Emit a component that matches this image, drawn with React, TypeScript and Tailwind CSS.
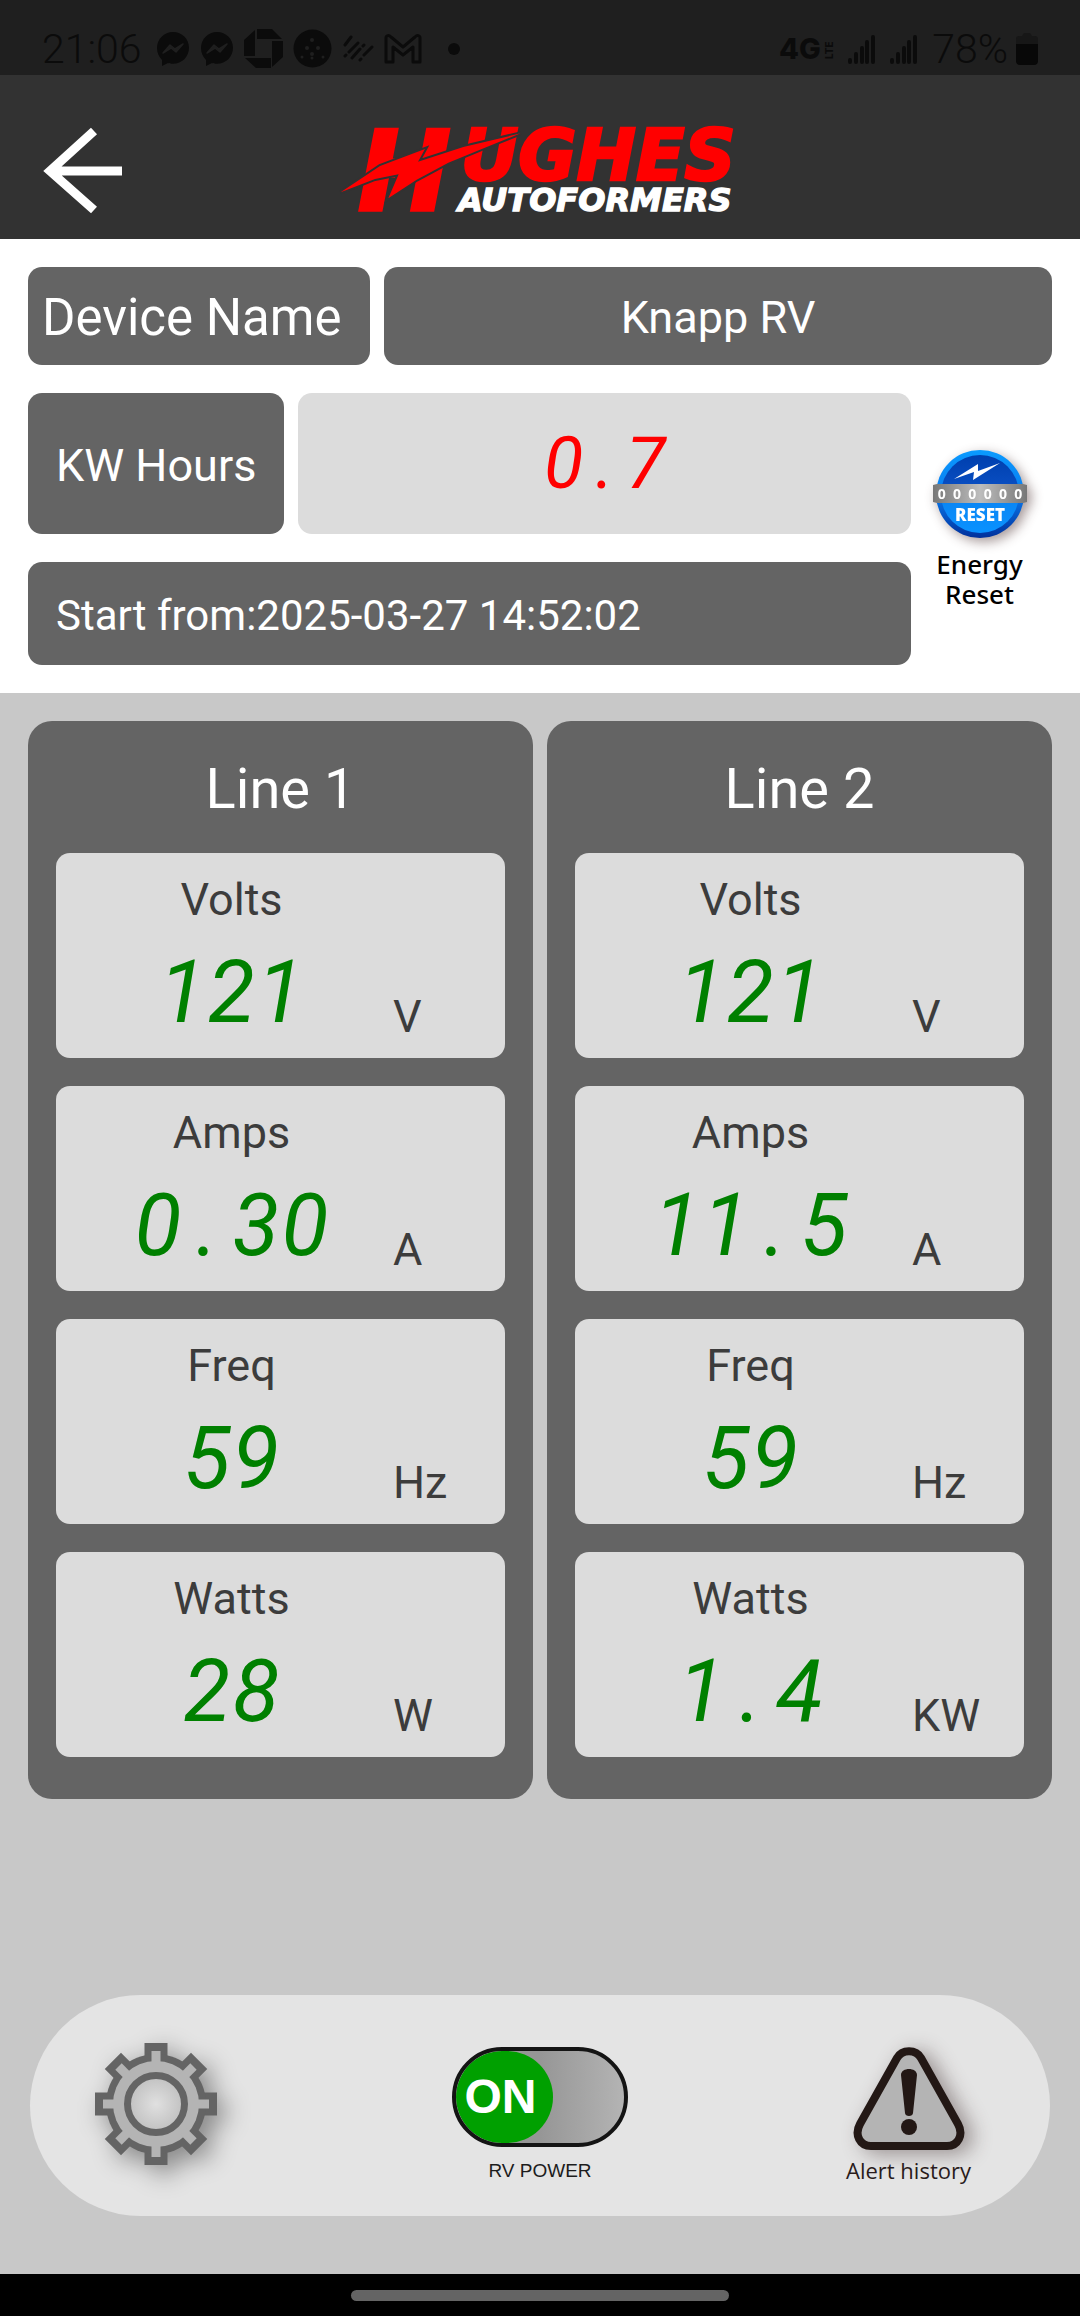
import React, { useState } from "react";

type Reading = { label: string; value: string; unit: string };

const lines: { title: string; readings: Reading[] }[] = [
  {
    title: "Line 1",
    readings: [
      { label: "Volts", value: "121", unit: "V" },
      { label: "Amps", value: "0.30", unit: "A" },
      { label: "Freq", value: "59", unit: "Hz" },
      { label: "Watts", value: "28", unit: "W" },
    ],
  },
  {
    title: "Line 2",
    readings: [
      { label: "Volts", value: "121", unit: "V" },
      { label: "Amps", value: "11.5", unit: "A" },
      { label: "Freq", value: "59", unit: "Hz" },
      { label: "Watts", value: "1.4", unit: "KW" },
    ],
  },
];

const teeth = [0, 45, 90, 135, 180, 225, 270, 315];

function MessengerIcon() {
  return (
    <svg width="34" height="36" viewBox="0 0 34 36">
      <path d="M17 1C8 1 1 8 1 17c0 5 2 9 5 12v6l6-3c2 .6 3 .8 5 .8 9 0 16-7 16-16S26 1 17 1z" fill="#0b0b0b" />
      <path d="M7 22l7-8 5 4 8-5-7 8-5-4z" fill="#1f1f1f" stroke="#1f1f1f" strokeWidth="1.5" strokeLinejoin="round" />
    </svg>
  );
}

function SignalIcon() {
  return (
    <svg width="28" height="32" viewBox="0 0 28 32" stroke="#0b0b0b" strokeWidth="4" strokeLinecap="round">
      <path d="M2 27v2M8 21v8M14 15v14M19 9v20M25 4v25" />
    </svg>
  );
}

function StatusBar() {
  return (
    <div className="flex h-[75px] items-center justify-between bg-[#1f1f1f] px-[42px] pt-[22px] text-[41px] leading-[48px] font-light text-[#0b0b0b]">
      <div className="flex items-center">
        <span className="mr-[14px]">21:06</span>
        <div className="flex items-center gap-[10px]">
          <MessengerIcon />
          <MessengerIcon />
          <svg width="39" height="39" viewBox="0 0 39 39" fill="#0b0b0b">
            <path d="M13 0h15l10 10H13zM39 12v16L28 38V12zM27 39H12L1 29h26zM0 27V11L11 1v26z" />
          </svg>
          <svg width="39" height="39" viewBox="0 0 39 39">
            <circle cx="19.500" cy="19.500" r="19" fill="#0b0b0b" />
            <g fill="#1f1f1f">
              <circle cx="19" cy="11" r="2" />
              <circle cx="14" cy="19" r="2" />
              <circle cx="25" cy="19" r="2" />
              <circle cx="19" cy="25" r="2" />
              <circle cx="9" cy="28" r="1.500" />
              <circle cx="19" cy="29" r="1.500" />
              <circle cx="30" cy="28" r="1.500" />
            </g>
          </svg>
          <svg width="32" height="28" viewBox="0 0 32 28" stroke="#0b0b0b" strokeWidth="3" strokeLinecap="round">
            <path d="M3 10l6-8M3 21l1-1M7 17l9-9M10 23l8-9M21 11l1-1M18 25l1-1M22 20l8-8" />
          </svg>
          <svg width="38" height="30" viewBox="0 0 38 30" fill="none" stroke="#0b0b0b" strokeWidth="3" strokeLinejoin="round">
            <path d="M2 28V4c0-3 3-3 5-1l12 10L31 3c2-2 5-2 5 1v24h-7V13L19 21 9 13v15z" />
          </svg>
          <span className="ml-4 size-3 rounded-full bg-[#0b0b0b]" />
        </div>
      </div>
      <div className="flex items-center gap-[14px]">
        <svg className="overflow-visible" width="55" height="36" viewBox="0 0 55 36" fill="#0b0b0b" fontFamily="Inter, sans-serif" fontWeight="800">
          <text x="0" y="28" fontSize="29">4G</text>
          <text fontSize="10" transform="translate(54 28) rotate(-90)">LTE</text>
        </svg>
        <SignalIcon />
        <SignalIcon />
        <span className="flex items-center gap-2">
          78%
          <svg width="22" height="32" viewBox="0 0 22 32">
            <path d="M0 11V6c0-2 1-3 3-3h3l2-3h6l2 3h3c2 0 3 1 3 3v5z" fill="#171717" />
            <path d="M0 11h22v17c0 2-1 4-4 4H4c-3 0-4-2-4-4z" fill="#080808" />
          </svg>
        </span>
      </div>
    </div>
  );
}

function Logo() {
  return (
    <svg className="w-[400px] overflow-visible" viewBox="60 30 1200 300" fontFamily="'DejaVu Sans', sans-serif" fontWeight="700" fontStyle="italic" role="img" aria-label="Hughes Autoformers">
      <text x="113" y="298" fontSize="334" fill="#ff0000" stroke="#ff0000" strokeWidth="10">H</text>
      <text x="422" y="208" fontSize="213" fill="#ff0000" stroke="#ff0000" strokeWidth="8">UGHES</text>
      <text x="414" y="299" fontSize="96" fill="#ffffff" stroke="#ffffff" strokeWidth="4">AUTOFORMERS</text>
      <path
        d="M62 244L180 165 315 114 294 152 430 108 602 67 480 116 385 155 290 206 205 262 236 190 165 204z"
        fill="#ff0000"
        stroke="#323232"
        strokeWidth="12"
        paintOrder="stroke"
      />
    </svg>
  );
}

function Header() {
  return (
    <header className="grid h-[164px] grid-cols-[1fr_auto_1fr] items-center bg-[#323232] px-10 pt-7">
      <button type="button" aria-label="Back" className="justify-self-start">
        <svg width="84" height="98" viewBox="0 0 84 98" fill="none" stroke="#ffffff" strokeWidth="9">
          <path d="M54 9L10 49l44 39M9 49h73" />
        </svg>
      </button>
      <Logo />
    </header>
  );
}

// Every character takes one cell of equal width, as on a LED panel.
function Led({ value, small }: { value: string; small?: boolean }) {
  return (
    <div className={small ? "flex text-[72px] leading-[84px] italic text-[#ff0000]" : "mt-4 flex text-[86px] leading-[100px] italic text-[#008000]"}>
      {value.split("").map((char, i) => (
        <span key={i} className={small ? "w-[41px] text-center" : "w-[49px] text-center"}>
          {char}
        </span>
      ))}
    </div>
  );
}

function EnergyReset() {
  return (
    <button type="button" className="flex flex-col items-center font-['Noto_Sans',sans-serif] text-[26px] leading-[30px] font-medium text-black">
      <svg className="overflow-visible drop-shadow-[4px_4px_6px_rgba(60,30,30,0.45)]" width="94" height="90" viewBox="0 0 94 90">
        <defs>
          <linearGradient id="reset-rim" x1="0" y1="0" x2="0" y2="1">
            <stop offset="0" stopColor="#0a9bff" />
            <stop offset="0.500" stopColor="#0a7cf0" />
            <stop offset="1" stopColor="#00309c" />
          </linearGradient>
          <linearGradient id="reset-face" x1="0" y1="0" x2="0" y2="1">
            <stop offset="0" stopColor="#003fae" />
            <stop offset="0.450" stopColor="#0a50c4" />
            <stop offset="0.600" stopColor="#0a86f4" />
            <stop offset="1" stopColor="#0a92ff" />
          </linearGradient>
          <linearGradient id="reset-band" x1="0" y1="0" x2="1" y2="0">
            <stop offset="0" stopColor="#777" />
            <stop offset="0.500" stopColor="#bdbdbd" />
            <stop offset="1" stopColor="#777" />
          </linearGradient>
        </defs>
        <circle cx="47" cy="45" r="44" fill="url(#reset-rim)" />
        <circle cx="47" cy="45" r="39" fill="url(#reset-face)" />
        <path d="M21 30L45 15v7l22-8-27 17 1-8z" fill="#fff" />
        <path d="M0 36l4-1h86l4 1v17l-4 1H4l-4-1z" fill="url(#reset-band)" />
        <text x="47" y="50" textAnchor="middle" fontSize="14" fontWeight="700" fontFamily="'Open Sans', sans-serif" fill="#fff" className="whitespace-pre">
          {"0  0  0  0  0  0"}
        </text>
        <text x="47" y="72" textAnchor="middle" fontSize="17" fontWeight="800" fontFamily="'Open Sans', sans-serif" fill="#fff">
          RESET
        </text>
      </svg>
      <span className="mt-[10px]">Energy</span>
      <span>Reset</span>
    </button>
  );
}

function DeviceSection() {
  return (
    <section className="flex flex-col gap-7 bg-white p-7 text-[45px] leading-[52px] text-white">
      <div className="flex gap-[14px]">
        <div className="flex h-[98px] w-[342px] items-center rounded-[14px] bg-[#646464] px-[14px] pt-1 text-[51px]">Device Name</div>
        <div className="flex flex-1 items-center justify-center rounded-[14px] bg-[#646464] pt-1">Knapp RV</div>
      </div>
      <div className="flex">
        <div className="flex flex-1 flex-col gap-7">
          <div className="flex h-[141px] gap-[14px]">
            <div className="flex items-center rounded-[14px] bg-[#646464] px-7 pt-1">KW Hours</div>
            <div className="flex flex-1 items-center justify-center rounded-[14px] bg-[#dcdcdc]">
              <Led value="0.7" small />
            </div>
          </div>
          <div className="flex h-[103px] items-center rounded-[14px] bg-[#646464] px-7 pt-1 text-[42px]">Start from:2025-03-27 14:52:02</div>
        </div>
        <div className="flex w-[141px] items-center justify-center pr-1">
          <EnergyReset />
        </div>
      </div>
    </section>
  );
}

function ReadingCard({ label, value, unit }: Reading) {
  return (
    <div className="flex h-[205px] rounded-[14px] bg-[#dcdcdc] pl-[14px] text-[45px] leading-[54px] text-[#3c3c3c]">
      <div className="flex flex-1 flex-col items-center pt-5">
        <span>{label}</span>
        <Led value={value} />
      </div>
      <div className="w-[112px] self-end pb-[14px]">{unit}</div>
    </div>
  );
}

function BottomBar() {
  const [power, setPower] = useState(true);

  return (
    <nav className="mx-[30px] mt-auto mb-[58px] grid h-[221px] grid-cols-[1fr_auto_1fr] items-start rounded-full bg-[#e4e4e4] px-[65px] pt-12">
      <button type="button" aria-label="Settings" className="justify-self-start">
        <svg className="overflow-visible drop-shadow-[8px_8px_12px_rgba(0,0,0,0.4)]" width="122" height="122" viewBox="0 0 122 122">
          <defs>
            <radialGradient id="hub">
              <stop offset="0" stopColor="#e0e0e0" />
              <stop offset="1" stopColor="#c0c0c0" />
            </radialGradient>
          </defs>
          {teeth.map((angle) => (
            <rect key={angle} x="49.500" y="0" width="23" height="24" fill="#646464" transform={`rotate(${angle} 61 61)`} />
          ))}
          <circle cx="61" cy="61" r="50" fill="#646464" />
          <circle cx="61" cy="61" r="43" fill="#b4b4b4" />
          {teeth.map((angle) => (
            <rect key={angle} x="56.500" y="8" width="9" height="14" fill="#b4b4b4" transform={`rotate(${angle} 61 61)`} />
          ))}
          <circle cx="61" cy="61" r="28.500" fill="url(#hub)" stroke="#646464" strokeWidth="7" />
        </svg>
      </button>

      <label className="mt-1 flex cursor-pointer flex-col items-center font-['Liberation_Sans',sans-serif] text-[19px] leading-6 text-[#1c1c1c]">
        <input type="checkbox" role="switch" className="sr-only" checked={power} onChange={(e) => setPower(e.target.checked)} />
        <span className="flex h-[100px] w-[176px] overflow-hidden rounded-full border-4 border-[#141414] bg-linear-to-r from-[#969696] from-50% to-[#b4b4b4]">
          <span className={power ? "flex w-[97px] items-center justify-center rounded-full bg-[#00a000] pr-2 text-[48px] font-bold text-white" : "ml-auto flex w-[97px] items-center justify-center rounded-full bg-[#646464] text-[36px] font-bold text-white"}>
            {power ? "ON" : "OFF"}
          </span>
        </span>
        <span className="mt-3">RV POWER</span>
      </label>

      <button type="button" className="mt-1 mr-[14px] flex flex-col items-center justify-self-end font-['Open_Sans',sans-serif] text-[22px] leading-6 font-medium text-[#2a1c1c]">
        <svg className="overflow-visible drop-shadow-[8px_4px_10px_rgba(40,20,20,0.4)]" width="112" height="103" viewBox="0 0 112 103">
          <path
            d="M44 11C49 2 63 2 68 11L105 77C111 88 105 99 94 99H18C7 99 1 88 7 77z"
            fill="#b4b4b4"
            stroke="#231815"
            strokeWidth="8"
            strokeLinejoin="round"
          />
          <path d="M48 28c0-8 16-8 16 0l-4 38c0 4-8 4-8 0z" fill="#231815" />
          <circle cx="56" cy="80" r="8" fill="#231815" />
        </svg>
        <span className="mt-2">Alert history</span>
      </button>
    </nav>
  );
}

export default function App() {
  return (
    <div className="flex min-h-screen flex-col bg-[#c8c8c8] font-[Roboto,sans-serif]">
      <StatusBar />
      <Header />
      <DeviceSection />
      <main className="flex gap-[14px] p-7">
        {lines.map((line) => (
          <section key={line.title} className="flex flex-1 flex-col gap-7 rounded-[24px] bg-[#646464] px-7 pt-8 pb-[42px]">
            <h2 className="text-center text-[56px] leading-[72px] text-white">{line.title}</h2>
            {line.readings.map((reading) => (
              <ReadingCard key={reading.label} {...reading} />
            ))}
          </section>
        ))}
      </main>
      <BottomBar />
      <div className="flex h-[42px] items-center justify-center bg-black">
        <span className="h-[11px] w-[378px] rounded-full bg-[#646464]" />
      </div>
    </div>
  );
}
